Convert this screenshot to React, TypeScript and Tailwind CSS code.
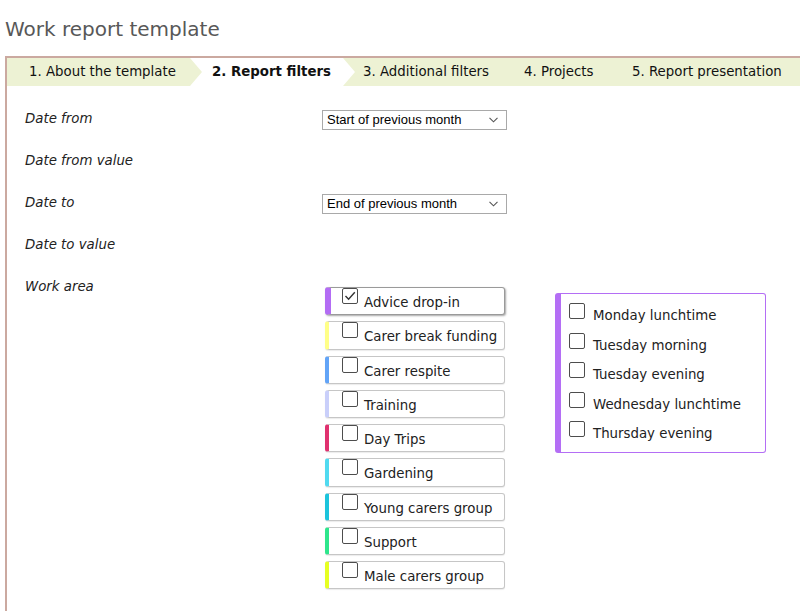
import React from "react";

const font = { fontFamily: '"DejaVu Sans", Verdana, sans-serif' };

function Box({ checked }: { checked?: boolean }) {
  return (
    <span className="relative block w-[16px] h-[16px] shrink-0 border border-[#4d4d4d] rounded-[2px] bg-white">
      {checked && (
        <svg className="absolute left-[0px] top-[0px]" width="14" height="14" viewBox="0 0 14 14">
          <path d="M2.5 7 L5.6 10.2 L11.8 3.2" fill="none" stroke="#333" strokeWidth="1.4" />
        </svg>
      )}
    </span>
  );
}

function Select({ value }: { value: string }) {
  return (
    <div className="w-[185px] h-[20px] border border-[#a9a9a9] bg-white flex items-center justify-between pl-[4px] pr-[8px] text-[13px] text-black" style={{ fontFamily: '"Liberation Sans", Arial, sans-serif' }}>
      <span>{value}</span>
      <svg width="9" height="6" viewBox="0 0 9 6">
        <path d="M0.5 0.8 L4.5 4.8 L8.5 0.8" fill="none" stroke="#555" strokeWidth="1.1" />
      </svg>
    </div>
  );
}

const areas: { label: string; color: string; checked?: boolean }[] = [
  { label: "Advice drop-in", color: "border-l-[#b36cf4]", checked: true },
  { label: "Carer break funding", color: "border-l-[#ffff88]" },
  { label: "Carer respite", color: "border-l-[#62a4f7]" },
  { label: "Training", color: "border-l-[#c9cffa]" },
  { label: "Day Trips", color: "border-l-[#e0316f]" },
  { label: "Gardening", color: "border-l-[#50daf0]" },
  { label: "Young carers group", color: "border-l-[#1cc4dc]" },
  { label: "Support", color: "border-l-[#2ee68c]" },
  { label: "Male carers group", color: "border-l-[#e6ff22]" },
];

const sessions = ["Monday lunchtime", "Tuesday morning", "Tuesday evening", "Wednesday lunchtime", "Thursday evening"];

function Chevron({ fill }: { fill: string }) {
  return (
    <svg className="absolute right-[-12px] top-0" width="12" height="28" viewBox="0 0 12 28">
      <polygon points="0,0 12,14 0,28" fill={fill} />
    </svg>
  );
}

export default function App() {
  return (
    <div className="w-[800px] h-[611px] overflow-hidden bg-white text-[#222]" style={font}>
      <div className="pt-[17px] pl-[5px] h-[41px] leading-[24px] text-[20px] text-[#585858]">Work report template</div>
      <div className="mt-[15px] ml-[5px] border-t-[2px] border-l-[2px] border-[#cba9a0] h-[600px]">
        <div className="flex h-[28px] bg-[#edf2d4] text-[13.33px] leading-[28px] text-[#111]">
          <div className="relative z-20 w-[183px] pl-[22px] bg-[#edf2d4]">
            1. About the template
            <Chevron fill="#edf2d4" />
          </div>
          <div className="relative z-10 w-[153px] pl-[22px] bg-white font-bold">
            2. Report filters
            <Chevron fill="#ffffff" />
          </div>
          <div className="w-[164px] pl-[20px]">3. Additional filters</div>
          <div className="w-[107px] pl-[17px]">4. Projects</div>
          <div className="pl-[18px] whitespace-nowrap">5. Report presentation</div>
        </div>
        <div className="pl-[18px] pt-[23px] text-[13.33px]">
          <div className="flex h-[42px]">
            <div className="w-[297px] italic leading-[20px]">Date from</div>
            <div className="mt-[1px]"><Select value="Start of previous month" /></div>
          </div>
          <div className="flex h-[42px]">
            <div className="w-[297px] italic leading-[20px]">Date from value</div>
          </div>
          <div className="flex h-[42px]">
            <div className="w-[297px] italic leading-[20px]">Date to</div>
            <div className="mt-[1px]"><Select value="End of previous month" /></div>
          </div>
          <div className="flex h-[42px]">
            <div className="w-[297px] italic leading-[20px]">Date to value</div>
          </div>
          <div className="flex">
            <div className="w-[297px] italic leading-[20px]">Work area</div>
            <div className="ml-[3px] mt-[10px] flex flex-col gap-[6px] w-[180px]">
              {areas.map((a, i) => (
                <div
                  key={a.label}
                  className={
                    "flex items-start h-[28.25px] bg-white rounded-[3px] border " +
                    a.color +
                    (i === 0
                      ? " border-[#9a9a9a] border-l-[6px] shadow-[1px_1px_2px_rgba(0,0,0,0.35)]"
                      : " border-[#c6c6c6] border-l-[4px] shadow-[0_1px_1px_rgba(0,0,0,0.08)]")
                  }
                >
                  <span className={i === 0 ? "ml-[11px]" : "ml-[13px]"}>
                    <Box checked={a.checked} />
                  </span>
                  <span className="ml-[6px] mt-[6px] leading-[18px] whitespace-nowrap">{a.label}</span>
                </div>
              ))}
            </div>
            <div className="ml-[50px] mt-[16px] w-[211px] h-[160px] border border-[#b46ef5] border-l-[6px] rounded-[3px] pt-[9px] pl-[8px]">
              {sessions.map((s) => (
                <div key={s} className="flex items-start h-[29.5px]">
                  <Box />
                  <span className="ml-[8px] mt-[4px] leading-[18px] whitespace-nowrap">{s}</span>
                </div>
              ))}
            </div>
          </div>
        </div>
      </div>
    </div>
  );
}
